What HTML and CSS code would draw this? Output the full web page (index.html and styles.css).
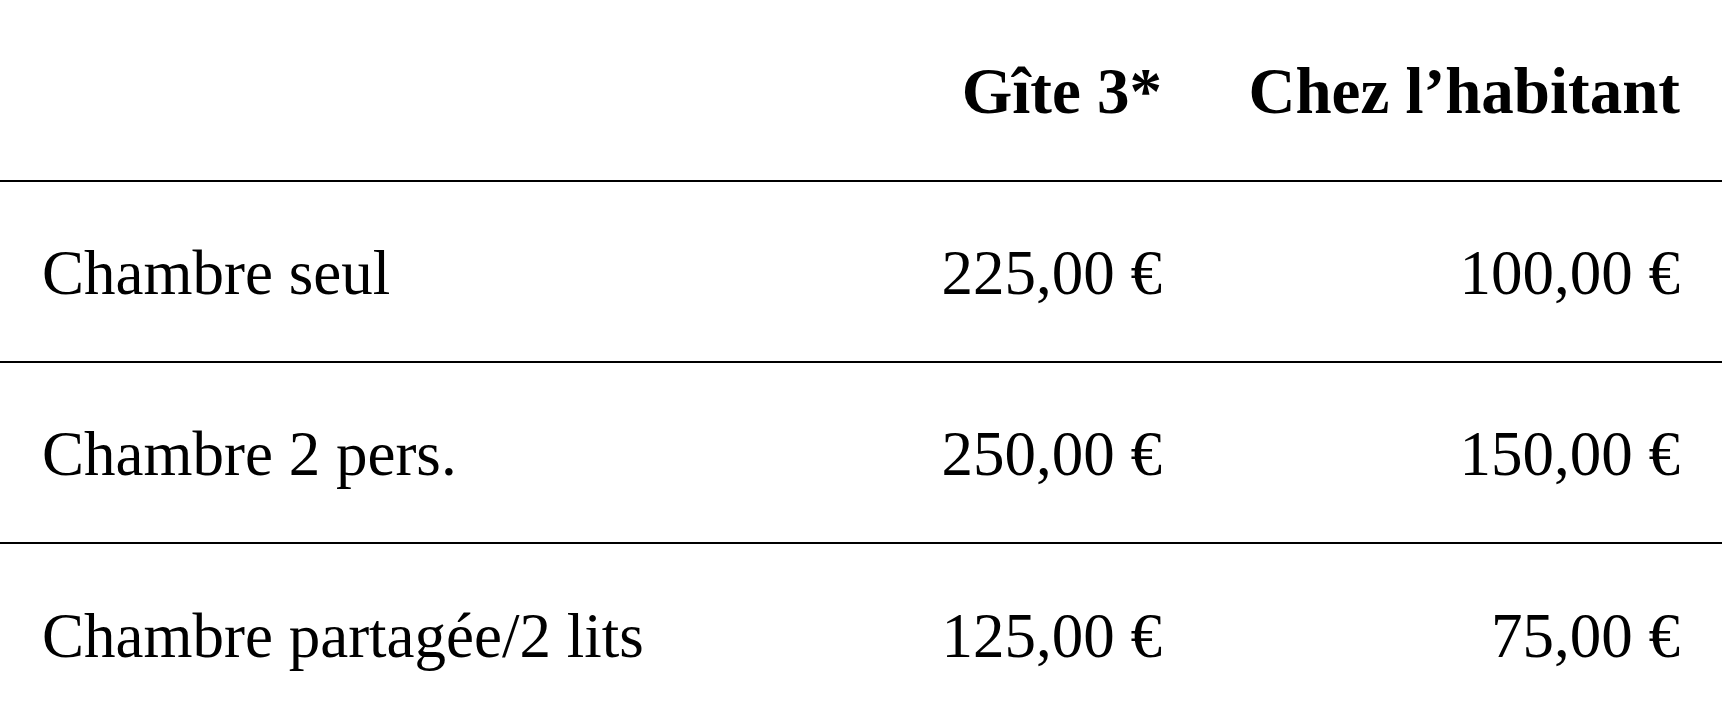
FILE: index.html
```html
<!DOCTYPE html>
<html lang="fr">
<head>
<meta charset="utf-8">
<title>Tarifs</title>
<link rel="stylesheet" href="styles.css">
</head>
<body>
<table class="prices">
  <colgroup>
    <col class="col-label">
    <col class="col-gite">
    <col class="col-habitant">
  </colgroup>
  <thead>
    <tr>
      <th class="cell label"></th>
      <th class="cell num">Gîte 3*</th>
      <th class="cell num">Chez l’habitant</th>
    </tr>
  </thead>
  <tbody>
    <tr>
      <td class="cell label">Chambre seul</td>
      <td class="cell num">225,00 €</td>
      <td class="cell num">100,00 €</td>
    </tr>
    <tr>
      <td class="cell label">Chambre 2 pers.</td>
      <td class="cell num">250,00 €</td>
      <td class="cell num">150,00 €</td>
    </tr>
    <tr>
      <td class="cell label">Chambre partagée/2 lits</td>
      <td class="cell num">125,00 €</td>
      <td class="cell num">75,00 €</td>
    </tr>
  </tbody>
</table>
</body>
</html>
```

FILE: styles.css
```css
html, body {
  margin: 0;
  padding: 0;
  background: #ffffff;
}

body {
  font-family: Georgia, "Liberation Serif", "DejaVu Serif", serif;
  color: #000000;
}

.prices {
  width: 100%;
  border-collapse: collapse;
  table-layout: fixed;
}

.col-gite {
  width: 311px;
}

.col-habitant {
  width: 518px;
}

.cell {
  font-size: 63px;
  font-weight: normal;
  height: 181px;
  padding: 4px 42px 0 42px;
  box-sizing: border-box;
  vertical-align: middle;
  white-space: nowrap;
  line-height: 1.15;
}

thead .cell {
  font-size: 65px;
  font-weight: bold;
  height: 181px;
  padding-top: 2px;
}

.label {
  text-align: left;
}

.num {
  text-align: right;
}

thead tr,
tbody tr:not(:last-child) {
  border-bottom: 2px solid #000000;
}
```
